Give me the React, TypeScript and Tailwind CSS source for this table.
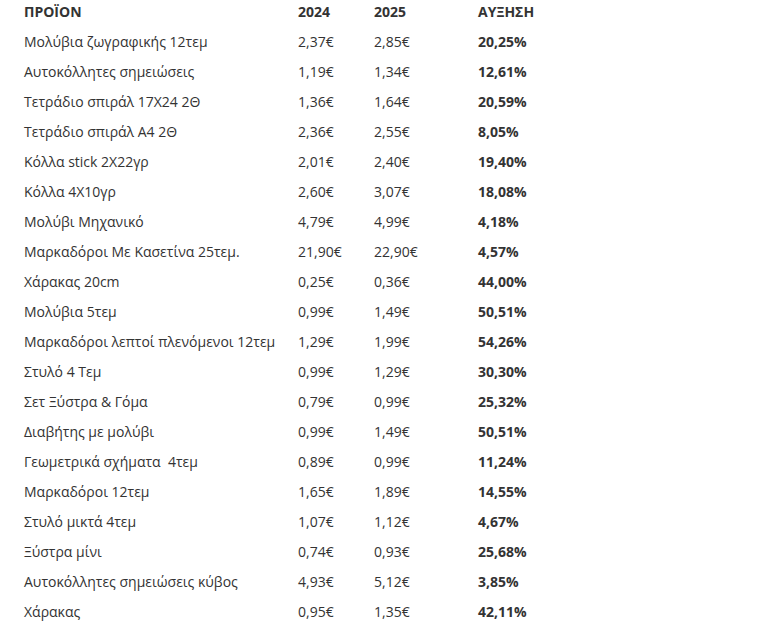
const rows: [string, string, string, string][] = [
  ["Μολύβια ζωγραφικής 12τεμ", "2,37€", "2,85€", "20,25%"],
  ["Αυτοκόλλητες σημειώσεις", "1,19€", "1,34€", "12,61%"],
  ["Τετράδιο σπιράλ 17Χ24 2Θ", "1,36€", "1,64€", "20,59%"],
  ["Τετράδιο σπιράλ Α4 2Θ", "2,36€", "2,55€", "8,05%"],
  ["Κόλλα stick 2Χ22γρ", "2,01€", "2,40€", "19,40%"],
  ["Κόλλα 4Χ10γρ", "2,60€", "3,07€", "18,08%"],
  ["Μολύβι Μηχανικό", "4,79€", "4,99€", "4,18%"],
  ["Μαρκαδόροι Με Κασετίνα 25τεμ.", "21,90€", "22,90€", "4,57%"],
  ["Χάρακας 20cm", "0,25€", "0,36€", "44,00%"],
  ["Μολύβια 5τεμ", "0,99€", "1,49€", "50,51%"],
  ["Μαρκαδόροι λεπτοί πλενόμενοι 12τεμ", "1,29€", "1,99€", "54,26%"],
  ["Στυλό 4 Τεμ", "0,99€", "1,29€", "30,30%"],
  ["Σετ Ξύστρα & Γόμα", "0,79€", "0,99€", "25,32%"],
  ["Διαβήτης με μολύβι", "0,99€", "1,49€", "50,51%"],
  ["Γεωμετρικά σχήματα  4τεμ", "0,89€", "0,99€", "11,24%"],
  ["Μαρκαδόροι 12τεμ", "1,65€", "1,89€", "14,55%"],
  ["Στυλό μικτά 4τεμ", "1,07€", "1,12€", "4,67%"],
  ["Ξύστρα μίνι", "0,74€", "0,93€", "25,68%"],
  ["Αυτοκόλλητες σημειώσεις κύβος", "4,93€", "5,12€", "3,85%"],
  ["Χάρακας", "0,95€", "1,35€", "42,11%"],
];

const grid = "grid grid-cols-[274px_76px_104px_1fr] pl-6";

export default function App() {
  return (
    <div className="min-h-[622px] bg-white font-['Open_Sans',sans-serif] text-[14px] leading-5 text-[#333]">
      <div className={`${grid} pt-[2px] pb-[5px] font-bold`}>
        <div>ΠΡΟΪΟΝ</div>
        <div>2024</div>
        <div>2025</div>
        <div>ΑΥΞΗΣΗ</div>
      </div>
      {rows.map(([name, a, b, inc]) => (
        <div key={name} className={`${grid} py-[5px]`}>
          <div className="whitespace-pre">{name}</div>
          <div>{a}</div>
          <div>{b}</div>
          <div className="font-bold">{inc}</div>
        </div>
      ))}
    </div>
  );
}
